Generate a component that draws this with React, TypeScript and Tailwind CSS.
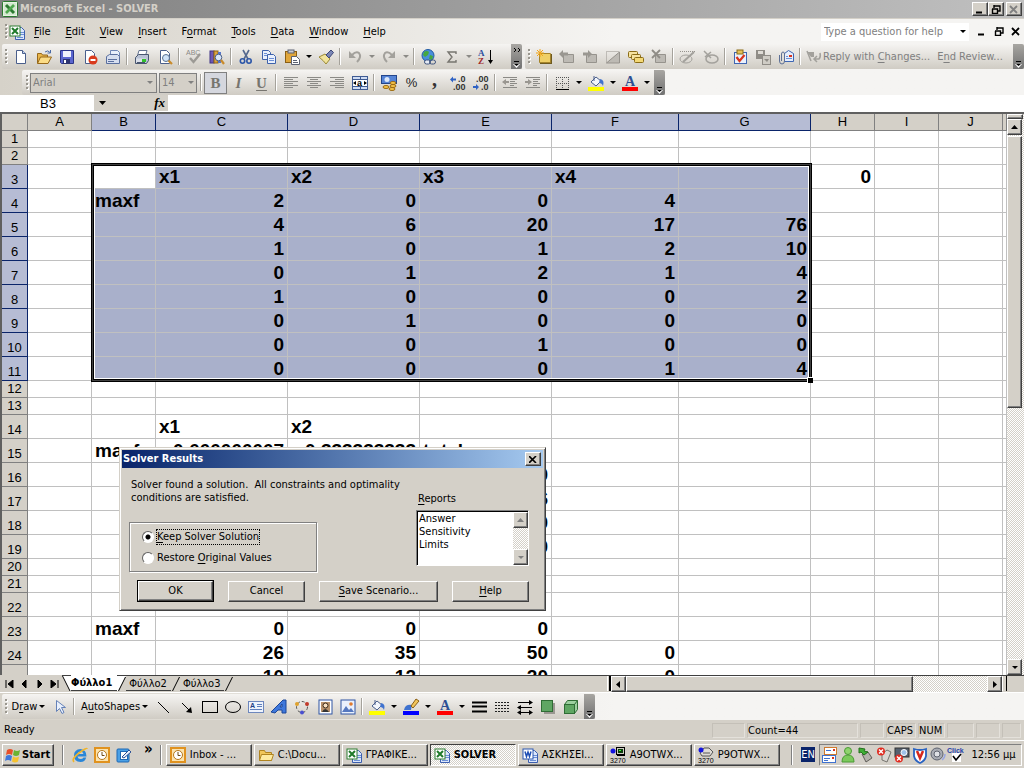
import { useState } from "react";
import type { ReactNode } from "react";

const RAISED =
  "bg-[#d4d0c8] border border-t-white border-l-white border-r-[#404040] border-b-[#404040] shadow-[inset_-1px_-1px_0_#808080]";
const UI_FONT = "font-['DejaVu_Sans_Condensed','DejaVu_Sans',sans-serif]";
const BAR = "flex h-[25px] items-center rounded-l-xs bg-linear-to-b from-[#f5f4f2] to-[#d0ccc4]";
const DITHER = "bg-[repeating-conic-gradient(#ffffff_0_25%,#d4d0c8_0_50%)] bg-[length:2px_2px]";

const page = <path d="M3.5 1.5h6l3 3v10h-9z" fill="#fff" stroke="#4a5f8c" />;
const excelBox = (
  <>
    <rect x="1" y="2" width="10" height="10" fill="#fff" stroke="#2f7d32" />
    <path d="M3 4l6 6M9 4l-6 6" stroke="#1f7a2a" strokeWidth="2" />
  </>
);
const lines = (d: string, c = "#8b8a86") => <path d={d} stroke={c} strokeWidth="1" fill="none" shapeRendering="crispEdges" />;
const greyNote = <path d="M4.5 5.5h10v8h-10z" fill="#bdbab4" stroke="#96938d" />;

const icons: Record<string, ReactNode> = {
  excel: (
    <>
      <rect x="0.5" y="0.5" width="15" height="15" rx="1" fill="#e6f2e2" stroke="#2b7a2f" />
      <rect x="2" y="2" width="12" height="12" fill="#d3e8cf" />
      <path d="M4 4l8 8" stroke="#2b7a2f" strokeWidth="3" />
      <path d="M12 4l-8 8" stroke="#4fa84f" strokeWidth="2.6" />
    </>
  ),
  workbook: (
    <>
      <path d="M6.5 3.5h6l3 3v9h-9z" fill="#dbe6fb" stroke="#3c5fae" />
      {lines("M11 8.5h4M11 10.5h4M8 13.5h6", "#6b8fd6")}
      {excelBox}
    </>
  ),
  wordDoc: (
    <>
      <path d="M6.5 3.5h6l3 3v9h-9z" fill="#dbe6fb" stroke="#3c5fae" />
      {lines("M11 8.5h4M11 10.5h4M8 13.5h6", "#6b8fd6")}
      <rect x="1" y="2" width="10" height="10" fill="#fff" stroke="#2b56b0" />
      <path d="M3 4.5l1.5 5L6 5l1.5 4.5L9 4.5" fill="none" stroke="#1f4fb4" strokeWidth="1.5" />
    </>
  ),
  newDoc: (
    <>
      {page}
      <path d="M9.5 1.5v3h3" fill="#c4d5f2" stroke="#4a5f8c" />
    </>
  ),
  open: (
    <>
      <path d="M1.5 4.5h4l1 1.5h5v8h-10z" fill="#e9b64a" stroke="#97681a" />
      <path d="M1.5 14.5l3-6.5h11l-3.5 6.5z" fill="#fbdc86" stroke="#97681a" />
      <path d="M9 3q3-2.5 5 .5M14.5 1v3h-3" fill="none" stroke="#4a6aa5" />
    </>
  ),
  save: (
    <>
      <path d="M1.5 1.5h13v13h-12l-1-1z" fill="#5b66cf" stroke="#2a3488" />
      <rect x="4" y="2" width="8" height="6" fill="#eef1fb" />
      <rect x="4" y="10" width="7" height="5" fill="#2c3470" />
      <rect x="5" y="11" width="2" height="3" fill="#fff" />
    </>
  ),
  permission: (
    <>
      {page}
      <circle cx="11" cy="11" r="4.5" fill="#d93a1c" />
      <rect x="8.5" y="10" width="5" height="2" fill="#fff" />
    </>
  ),
  printMail: (
    <>
      <path d="M5.5 1.5h7l2 2v6h-9z" fill="#e8effb" stroke="#6f86b6" />
      <path d="M1.5 7.5l3-2h8l2 2v7h-13z" fill="#d6deef" stroke="#5a6f9e" />
      {lines("M3 10.5h9M3 12.5h6", "#5a6f9e")}
    </>
  ),
  print: (
    <>
      <path d="M5 1.5h8l-1.5 5h-8z" fill="#fff" stroke="#60708f" />
      <path d="M1.5 8.5l3-3h10v6l-2 3h-11z" fill="#b9c2d4" stroke="#49566f" />
      <path d="M2 9.5h10v4H2z" fill="#dbe0ea" />
      <rect x="8" y="10" width="4" height="3" fill="#32c02c" />
      {lines("M3 13.5h8", "#49566f")}
    </>
  ),
  preview: (
    <>
      {page}
      <circle cx="9" cy="9" r="3.5" fill="#cfe2f8" stroke="#59708f" />
      <path d="M11.5 11.5l3.5 3.5" stroke="#c98b2b" strokeWidth="2.2" />
    </>
  ),
  spelling: (
    <>
      <text x="0" y="6" fontSize="7" fontFamily="Liberation Sans" fill="#8b8a86">
        ABC
      </text>
      <path d="M4 9l3.5 4L14 5" fill="none" stroke="#9c9a95" strokeWidth="2.4" />
    </>
  ),
  research: (
    <>
      <rect x="1" y="2" width="4" height="12" fill="#6d58b5" stroke="#3f3284" />
      <rect x="5" y="2" width="4" height="12" fill="#d9a441" stroke="#8f6415" />
      <rect x="9" y="3" width="3" height="11" fill="#5776c9" />
      <circle cx="9.5" cy="8.5" r="3.3" fill="#d8e6f9" stroke="#4b5f86" />
      <path d="M12 11l3 4" stroke="#c98b2b" strokeWidth="2.2" />
    </>
  ),
  cut: (
    <>
      <path d="M5 1l5 9M11 1L6 10" stroke="#55698f" strokeWidth="1.6" />
      <circle cx="4.5" cy="12" r="2.2" fill="none" stroke="#2c56a8" strokeWidth="1.6" />
      <circle cx="11" cy="12" r="2.2" fill="none" stroke="#2c56a8" strokeWidth="1.6" />
    </>
  ),
  copy: (
    <>
      <path d="M1.5 1.5h6l2 2v7h-8z" fill="#e9f0fc" stroke="#3e62ab" />
      <path d="M6.5 5.5h6l2 2v7h-8z" fill="#e9f0fc" stroke="#3e62ab" />
      {lines("M3 4.5h3M3 6.5h3M8 9.5h5M8 11.5h5", "#6b8fd6")}
    </>
  ),
  paste: (
    <>
      <rect x="1.5" y="2.5" width="11" height="11" fill="#e0a63a" stroke="#8a5f14" />
      <rect x="4" y="1" width="6" height="3" fill="#c9ccd4" stroke="#5b6170" />
      <path d="M7.5 7.5h5l3 3v5h-8z" fill="#fff" stroke="#5b6170" />
      {lines("M9 11.5h4M9 13.5h5", "#5b6170")}
    </>
  ),
  painter: (
    <>
      <path d="M1 8l6-3 5 5-4 5q-2-3-7-7z" fill="#f1e39a" stroke="#9b8a36" />
      <path d="M8 6l5-5 2.5 2.5L11 9z" fill="#7a86b5" stroke="#3c4676" />
    </>
  ),
  undo: (
    <>
      <path d="M2 2v7h7z" fill="#a3a19c" />
      <path d="M5 6q4-4 7-2 3 4-2 9" fill="none" stroke="#a3a19c" strokeWidth="2" />
    </>
  ),
  redo: (
    <>
      <path d="M14 2v7H7z" fill="#a3a19c" />
      <path d="M11 6Q7 2 4 4q-3 4 2 9" fill="none" stroke="#a3a19c" strokeWidth="2" />
    </>
  ),
  hyperlink: (
    <>
      <circle cx="7" cy="6.5" r="6" fill="#4a8fdb" stroke="#1f5aa3" />
      <path d="M3 3q3-2 5 0l-1 3-3 2-2-2zM9 6l3 1-1 4-3-1z" fill="#46a83f" />
      <rect x="3.5" y="11" width="6" height="4" rx="2" fill="#e5ebf5" stroke="#41557e" />
      <rect x="8.5" y="11" width="6" height="4" rx="2" fill="none" stroke="#41557e" />
    </>
  ),
  sum: <path d="M12 5V3H4l4 5-4 5h8v-2" fill="none" stroke="#77756f" strokeWidth="1.4" />,
  sort: (
    <>
      <text x="0" y="7" fontSize="9" fontWeight="bold" fontFamily="Liberation Serif" fill="#2a4fa0">
        A
      </text>
      <text x="0" y="15" fontSize="9" fontWeight="bold" fontFamily="Liberation Serif" fill="#a02a2a">
        Z
      </text>
      <path d="M12.5 1v11" stroke="#000" />
      <path d="M10 11h5l-2.5 4z" />
    </>
  ),
  comment: (
    <>
      <path d="M4 5h12v10H4z" fill="#6e5a20" />
      <path d="M3.5 4.5h11v9h-11z" fill="#efcf66" stroke="#a5842a" />
      <path d="M4 0v8M0 4h8M1 1l6 6M7 1L1 7" stroke="#f2a516" />
    </>
  ),
  notePrev: (
    <>
      {greyNote}
      <path d="M0 5l4-4v2.5h5v3H4V9z" fill="#9a9791" />
    </>
  ),
  noteNext: (
    <>
      {greyNote}
      <path d="M10 5L6 1v2.500H1v3h5V9z" fill="#9a9791" />
    </>
  ),
  noteShow: (
    <>
      <path d="M1.5 13.5v-11h13" fill="none" stroke="#96938d" strokeDasharray="1 1" />
      <path d="M14.5 3v11h-13z" fill="#bdbab4" stroke="#96938d" />
    </>
  ),
  noteAll: (
    <>
      <rect x="0.5" y="2.5" width="9" height="6" rx="1" fill="#f6e3a0" stroke="#8b6c16" />
      <rect x="3.5" y="5.5" width="9" height="5" rx="1" fill="#f6e3a0" stroke="#8b6c16" />
      <rect x="6.5" y="8.5" width="9" height="5" rx="1" fill="#f3d876" stroke="#8b6c16" />
    </>
  ),
  noteDelete: (
    <>
      {greyNote}
      <path d="M1 1l8 8M9 1L1 9" stroke="#8f8c86" strokeWidth="1.8" />
    </>
  ),
  inkShow: (
    <>
      <path d="M0 2.5h15" stroke="#96938d" strokeDasharray="1 1" />
      <ellipse cx="6" cy="10" rx="6" ry="4" fill="none" stroke="#a3a19c" />
      <path d="M14 3L3 13" stroke="#a3a19c" strokeWidth="2" />
    </>
  ),
  inkErase: (
    <>
      <ellipse cx="9" cy="10" rx="6" ry="4" fill="none" stroke="#a3a19c" strokeWidth="1.5" />
      <path d="M1 2l7 7M8 3L2 8" stroke="#a3a19c" strokeWidth="1.5" />
    </>
  ),
  task: (
    <>
      <rect x="2.5" y="3.5" width="12" height="11" fill="#eaf1fd" stroke="#3f66b3" />
      <rect x="5" y="1" width="6" height="4" fill="#e4c15a" stroke="#8b6c16" />
      <path d="M4.5 8l3 4 5-6" fill="none" stroke="#d8341d" strokeWidth="2.2" />
    </>
  ),
  version: (
    <>
      <rect x="1" y="1" width="9" height="9" fill="#8f8c86" />
      <rect x="3" y="2" width="5" height="3" fill="#dedbd5" />
      <rect x="7.5" y="6.5" width="8" height="9" fill="#cfccc5" stroke="#8f8c86" />
      <path d="M9 10h5l-2 3z" fill="#8f8c86" />
    </>
  ),
  attach: (
    <>
      <path d="M6.5 4.5l4-3 5 3v8h-9z" fill="#e5eefc" stroke="#3f66b3" />
      <rect x="11" y="6" width="3" height="2" fill="#d8341d" />
      {lines("M8 7.5h2M8 9.5h6", "#6b8fd6")}
      <path d="M1.5 6v6q0 3 2.5 3t2.5-3V5q0-2-1.5-2T3.5 5v7" fill="none" stroke="#5d7096" />
    </>
  ),
  reply: (
    <>
      <path d="M1 3h7v5H5z" fill="#a3a19c" />
      <path d="M1 2l4 10M8 10h5q2-2 1-6M11 7l-3 3 3 3" fill="none" stroke="#a3a19c" strokeWidth="1.5" />
    </>
  ),
  alignLeft: lines("M1 2.5h14M1 4.5h9M1 6.5h14M1 8.5h9M1 10.5h14M1 12.5h9"),
  alignCenter: lines("M1 2.5h14M4 4.5h8M1 6.5h14M4 8.5h8M1 10.5h14M4 12.5h8"),
  alignRight: lines("M1 2.5h14M6 4.5h9M1 6.5h14M6 8.5h9M1 10.5h14M6 12.5h9"),
  merge: (
    <>
      <rect x="0.5" y="1.5" width="15" height="13" fill="#cfdcf3" stroke="#3e5a92" />
      {lines("M0 4.5h16M0 11.5h16M8.5 1v3M8.5 12v3", "#3e5a92")}
      <rect x="1" y="5" width="14" height="6" fill="#fff" />
      <text x="5" y="11" fontSize="9" fontWeight="bold" fontFamily="Liberation Sans">
        a
      </text>
      <path d="M1 8l3-2v4zM15 8l-3-2v4z" />
    </>
  ),
  currency: (
    <>
      <rect x="0.5" y="0.5" width="15" height="8" fill="#5684d6" stroke="#24468b" />
      <circle cx="6" cy="4.500" r="2.5" fill="#dbe8fb" />
      <ellipse cx="12" cy="8" rx="3" ry="1.5" fill="#f6c54a" stroke="#9b6a12" />
      <ellipse cx="12" cy="11" rx="3" ry="1.5" fill="#f6c54a" stroke="#9b6a12" />
      <ellipse cx="5" cy="12" rx="3" ry="1.5" fill="#f6c54a" stroke="#9b6a12" />
      <ellipse cx="11" cy="14" rx="3" ry="1.5" fill="#f6c54a" stroke="#9b6a12" />
    </>
  ),
  decInc: (
    <>
      <path d="M0 4.5l3-3v2h3v2H3v2z" fill="#2f62c4" />
      <text x="8" y="7" fontSize="9" fontWeight="bold" fontFamily="Liberation Sans" fill="#333">
        .0
      </text>
      <text x="3" y="15" fontSize="9" fontWeight="bold" fontFamily="Liberation Sans" fill="#333">
        .00
      </text>
    </>
  ),
  decDec: (
    <>
      <text x="3" y="7" fontSize="9" fontWeight="bold" fontFamily="Liberation Sans" fill="#333">
        .00
      </text>
      <text x="8" y="15" fontSize="9" fontWeight="bold" fontFamily="Liberation Sans" fill="#333">
        .0
      </text>
      <path d="M6 12l-3-3v2H0v2h3v2z" fill="#2f62c4" />
    </>
  ),
  outdent: (
    <>
      {lines("M1 2.5h14M8 4.5h7M8 6.5h5M8 8.5h7M1 12.5h14M8 10.5h4")}
      <path d="M0 7l4-3v2h3v2H4v2z" fill="#9a9791" />
    </>
  ),
  indent: (
    <>
      {lines("M1 2.5h14M8 4.5h7M8 6.5h5M8 8.5h7M1 12.5h14M8 10.5h4")}
      <path d="M7 7L3 4v2H0v2h3v2z" fill="#9a9791" />
    </>
  ),
  borders: (
    <>
      <path d="M2.5 2v11M8.5 2v11M14.5 2v11M2 2.5h13M2 8.5h13" stroke="#555" strokeDasharray="1 1" />
      <path d="M2 14.5h13" stroke="#000" />
    </>
  ),
  fill: (
    <>
      <path d="M3 7l5-5 5 4-5 5z" fill="#f2f5fb" stroke="#4a5f8c" />
      <path d="M6 1v5" stroke="#4a5f8c" />
      <path d="M12 4q5 1 3 7-1-3-4-3z" fill="#3f72cf" />
      <rect x="0" y="12" width="16" height="4" fill="#ffff00" />
    </>
  ),
  lineColor: (
    <>
      <path d="M1 11q1-6 8-5l-1 5z" fill="#3f72cf" />
      <path d="M8 7l5-7 3 2-6 7z" fill="#f2c55b" stroke="#8a5f14" />
      <rect x="0" y="12" width="16" height="4" fill="#0000ff" />
    </>
  ),
  fontColor: (
    <>
      <text x="3" y="11" fontSize="14" fontWeight="bold" fontFamily="Liberation Serif" fill="#2d4f94">
        A
      </text>
      <rect x="0" y="12" width="16" height="4" fill="#ff0000" />
    </>
  ),
  cursor: <path d="M4.5 1.5v11l3-3 2.5 5 2-1-2.5-5h4z" fill="#e9f0fc" stroke="#6582b8" />,
  line: <path d="M2 3l11 11" stroke="#000" />,
  arrow: (
    <>
      <path d="M3 4l8 8" stroke="#000" />
      <path d="M13 14l-1-6-5 5z" />
    </>
  ),
  rect: <rect x="0.5" y="2.5" width="15" height="11" fill="none" stroke="#000" />,
  oval: <ellipse cx="8" cy="8" rx="7.5" ry="5.5" fill="none" stroke="#000" />,
  textBox: (
    <>
      <rect x="0.5" y="2.5" width="15" height="11" fill="#eef3fc" stroke="#6d87bd" />
      <text x="2" y="9" fontSize="7" fontWeight="bold" fontFamily="Liberation Sans" fill="#1f3f85">
        A
      </text>
      {lines("M9 5.5h5M9 7.5h5M2 10.5h12", "#5e7fbd")}
    </>
  ),
  wordArt: <path d="M0 13L12 1h3v13h-4v-3H7l-3 3zM9 8h2V5z" fill="#3f78dc" stroke="#1d4798" fillRule="evenodd" />,
  diagram: (
    <>
      <circle cx="8" cy="8" r="5.5" fill="none" stroke="#555" strokeDasharray="3 2" />
      <circle cx="3" cy="5" r="2" fill="#e0a22e" />
      <circle cx="13" cy="5" r="2" fill="#c23a2b" />
      <circle cx="8" cy="13.5" r="2" fill="#4a4fd0" />
    </>
  ),
  clipArt: (
    <>
      <rect x="2" y="1" width="13" height="14" fill="#fff" stroke="#2f55a3" />
      <rect x="4" y="3" width="9" height="10" fill="#b9916a" />
      <circle cx="8.5" cy="6.5" r="2.5" fill="#f7dfc0" stroke="#3a2a1a" />
      <path d="M5 13q3-6 7 0z" fill="#333" />
    </>
  ),
  picture: (
    <>
      <rect x="1" y="1" width="14" height="14" fill="#eaf1fd" stroke="#2f55a3" />
      <path d="M2 13l4-6 3 4 2-2 3 4z" fill="#5578c0" />
      <circle cx="11" cy="5" r="1.8" fill="#e07a2e" />
    </>
  ),
  lineStyle: <path d="M1 3.5h15M1 7.5h15M1 12.5h15" stroke="#000" strokeWidth="2" />,
  dashStyle: <path d="M1 3.5h15M1 6.5h15M1 9.5h15M1 12.5h15" stroke="#222" strokeDasharray="2 1" />,
  arrowStyle: (
    <>
      <path d="M1 3.5h14M1 8.5h14M1 13.5h14" stroke="#000" />
      <path d="M12 1l4 2.5-4 2.5zM4 6L0 8.5 4 11zM12 11l4 2.5-4 2.5zM4 11l-4 2.5 4 2.5z" />
    </>
  ),
  shadow: (
    <>
      <rect x="4" y="4" width="11" height="11" fill="#9a9791" />
      <rect x="1.5" y="1.5" width="11" height="11" fill="#5fa663" stroke="#2f6d35" />
    </>
  ),
  cube: (
    <>
      <path d="M1.5 5.5l3-4h10v9l-3 4h-10z" fill="#9dd0a0" stroke="#2f6d35" />
      <rect x="1.5" y="5.5" width="10" height="9" fill="#5fa663" stroke="#2f6d35" />
      <path d="M11.5 5.5l3-4" stroke="#2f6d35" />
    </>
  ),
  windows: (
    <>
      <path d="M2 3q3-2 6 0L7 8Q4 6 1 8z" fill="#e8502a" />
      <path d="M9 3q3 2 6 0l-1 5q-3 2-6 0z" fill="#6bb332" />
      <path d="M1 9q3-2 6 0l-1 5q-3-2-6 0z" fill="#3f78dc" />
      <path d="M8 9.5q3 2 6 0l-1 5q-3 2-6 0z" fill="#f6c22e" />
    </>
  ),
  ie: (
    <>
      <path
        d="M14.500 9.500H5.500q.5 2.500 3 2.500 2 0 3-1.500h2.700Q13 15 8.500 15 2 14.500 2 8.500T8.500 2q6 .5 6 7.500zM5.500 7h6Q11 4.800 8.500 4.800T5.500 7z"
        fill="#2a86d8"
        fillRule="evenodd"
      />
      <path d="M2 15q-3-3 5-9t8-4" fill="none" stroke="#f0b52b" strokeWidth="1.6" />
    </>
  ),
  outlook: (
    <>
      <rect x="1" y="1" width="14" height="14" fill="#fbe3ae" stroke="#e0921f" strokeWidth="2" />
      <circle cx="8" cy="8" r="4.5" fill="#fff" stroke="#b5761a" />
      <path d="M8 5v3.5h2.5" fill="none" stroke="#6d4a16" />
    </>
  ),
  desktop: (
    <>
      <rect x="1" y="2" width="12" height="13" rx="1" fill="#4aa0e6" stroke="#1f68b4" />
      <rect x="4.5" y="4.5" width="7" height="8" fill="#fff" stroke="#1f68b4" />
      <path d="M6 10l7-7 2 2-7 6z" fill="#e9f0fc" stroke="#2a4f94" />
    </>
  ),
  folder: (
    <>
      <path d="M1.5 3.5h5l1 2h6v8h-12z" fill="#f0c65a" stroke="#b08420" />
      <path d="M1.5 13.5l2-6h12l-2 6z" fill="#fdeaa0" stroke="#b08420" />
    </>
  ),
  terminal: (
    <>
      <circle cx="3" cy="4" r="2.5" fill="#1414e0" />
      <rect x="6.5" y="0.5" width="8" height="7" fill="#cfccc5" stroke="#000" />
      <rect x="8" y="2" width="5" height="4" fill="#0a3d0a" />
      <rect x="9" y="3" width="2" height="1" fill="#3cff3c" />
      <path d="M7 8.5h8" stroke="#000" />
      <text x="0" y="16" fontSize="7" fontFamily="Liberation Sans">
        3270
      </text>
    </>
  ),
  termPrint: (
    <>
      <path d="M6 1h5l4 4-3 4H4L2 6z" fill="#dedbd5" stroke="#555" />
      <path d="M5 6h7" stroke="#555" />
      <circle cx="3" cy="3" r="2.5" fill="#1414e0" />
      <text x="0" y="16" fontSize="7" fontFamily="Liberation Sans">
        3270
      </text>
    </>
  ),
  mails: (
    <>
      <rect x="2.5" y="0.5" width="12" height="7" fill="#fff" stroke="#d07a2e" />
      <rect x="0.5" y="8.5" width="13" height="7" fill="#fff" stroke="#3f72cf" />
      {lines("M4 3.5h5M2 11.5h6M2 13.5h4", "#3f72cf")}
      <rect x="11" y="2" width="2" height="2" fill="#d8341d" />
      <rect x="10" y="10" width="2" height="2" fill="#d8341d" />
    </>
  ),
  buddy: (
    <>
      <circle cx="8" cy="4" r="3.5" fill="#8fd36e" stroke="#4a9a34" />
      <path d="M2 15q0-7 6-7t6 7z" fill="#7cc95c" stroke="#4a9a34" />
    </>
  ),
  usb: (
    <>
      <path d="M4 7l6-2 4 6-6 4z" fill="#b5b2ac" stroke="#5f5d58" />
      <path d="M1 1l6 1-1 2 4 1-4 3-3-3-2 1z" fill="#3fae35" stroke="#23701c" />
    </>
  ),
  netOff: (
    <>
      <path d="M6 7l5-4 4 2-4 10-5-2z" fill="#d9d7d2" stroke="#77756f" />
      <circle cx="5" cy="4.5" r="4" fill="#e02b20" />
      <path d="M3 2.5l4 4M7 2.5l-4 4" stroke="#fff" strokeWidth="1.4" />
    </>
  ),
  camera: (
    <>
      <rect x="1" y="1" width="14" height="9" fill="#55606f" stroke="#333" />
      <circle cx="10" cy="5.5" r="3" fill="#9fc2ea" stroke="#fff" />
      <circle cx="5" cy="11.5" r="4" fill="#e02b20" />
      <path d="M3 9.5l4 4M7 9.5l-4 4" stroke="#fff" strokeWidth="1.4" />
    </>
  ),
  shield: (
    <>
      <path d="M2 2q6 2 12 0v7q-1 5-6 7-5-2-6-7z" fill="#fff" stroke="#2a63c0" strokeWidth="1.8" />
      <path d="M5 4l3 7 3-7" fill="none" stroke="#d8281c" strokeWidth="2.5" />
    </>
  ),
  speaker: (
    <>
      <circle cx="7" cy="7" r="6" fill="#a8abb3" stroke="#5f6470" />
      <circle cx="7" cy="7" r="3" fill="#dfe1e6" stroke="#5f6470" />
      <path d="M12 13q3-2 3-6" fill="none" stroke="#9aa6e0" strokeWidth="1.5" />
    </>
  ),
  click: (
    <>
      <rect x="4" y="6" width="9" height="9" fill="#fff" />
      <path d="M5 9l3 4 5-6" fill="none" stroke="#000" strokeWidth="1.6" />
      <text x="-1" y="6" fontSize="7" fontWeight="bold" fontFamily="Liberation Sans" fill="#1f3fa8">
        Click
      </text>
    </>
  ),
};

function Icon({ name }: { name: string }) {
  return (
    <svg width="16" height="16" viewBox="0 0 16 16" className="shrink-0 overflow-visible" aria-hidden="true">
      {icons[name]}
    </svg>
  );
}

function Tri({ dir = "down", color = "#000" }: { dir?: "up" | "down" | "left" | "right"; color?: string }) {
  const d = { up: "M0 5h7L3.5 1z", down: "M1 2h6L4 5z", left: "M5 0v7L1 3.5z", right: "M2 0v7l4-3.5z" }[dir];
  return (
    <svg width="7" height="7" viewBox="0 0 7 7" className="shrink-0" aria-hidden="true">
      <path d={d} fill={color} />
    </svg>
  );
}

// Label with its access key underlined
function Label({ text, at }: { text: string; at: number }) {
  return (
    <span className="whitespace-pre">
      {text.slice(0, at)}
      <span className="underline underline-offset-2">{text[at]}</span>
      {text.slice(at + 1)}
    </span>
  );
}

function Grip() {
  return (
    <svg width="3" height="17" className="mr-px shrink-0" aria-hidden="true">
      {[0, 4, 8, 12].map((y) => (
        <g key={y}>
          <rect x="1" y={y + 2} width="2" height="2" fill="#fff" />
          <rect x="0" y={y + 1} width="2" height="2" fill="#9a978f" />
        </g>
      ))}
    </svg>
  );
}

function BarEnd({ chevron = false }: { chevron?: boolean }) {
  return (
    <button
      aria-label="Toolbar options"
      className="ml-auto flex h-[25px] w-[11px] shrink-0 flex-col items-center justify-between rounded-r-xs bg-linear-to-b from-[#a8a6a2] to-[#727272] pt-1 pb-px"
    >
      <svg width="8" height="6" aria-hidden="true">
        {chevron && <path d="M1 0l2 2-2 2M5 0l2 2-2 2" fill="none" stroke="#000" />}
      </svg>
      <svg width="7" height="8" aria-hidden="true">
        <path d="M1 1.5h5" stroke="#000" />
        <path d="M0 4h7L3.5 8z" fill="#fff" />
        <path d="M1 4h5L3.5 6z" />
      </svg>
    </button>
  );
}

// "|" is a separator, "v" and "V" are drop-down arrows, the rest are icon names
function Tools({ items }: { items: string[] }) {
  return (
    <>
      {items.map((item, i) => {
        if (item === "|") return <span key={i} className="mx-[2px] h-[17px] w-[2px] shrink-0 border-l border-[#a5a29b] bg-white" />;
        if (item === "v" || item === "V")
          return (
            <button key={i} aria-label="More" className="flex h-[22px] w-[11px] shrink-0 items-center justify-center">
              <Tri color={item === "V" ? "#000" : "#8b8a86"} />
            </button>
          );
        return (
          <button key={i} aria-label={item} className="flex h-[22px] w-[23px] shrink-0 items-center justify-center">
            <Icon name={item} />
          </button>
        );
      })}
    </>
  );
}

function ScrollButton({ dir, color }: { dir: "up" | "down" | "left" | "right"; color?: string }) {
  return (
    <button aria-label={`Scroll ${dir}`} className={`flex h-4 w-[15px] shrink-0 items-center justify-center ${RAISED}`}>
      <Tri dir={dir} color={color} />
    </button>
  );
}

const cols = ["A", "B", "C", "D", "E", "F", "G", "H", "I", "J", ""];
const colWidths = ["w-16", "w-16", "w-[132px]", "w-[132px]", "w-[132px]", "w-[127px]", "w-[132px]", "w-16", "w-16", "w-16", "w-auto"];

const cells: Record<number, string[]> = {
  3: ["", "", "x1", "x2", "x3", "x4", "", "0"],
  4: ["", "maxf", "2", "0", "0", "4"],
  5: ["", "", "4", "6", "20", "17", "76"],
  6: ["", "", "1", "0", "1", "2", "10"],
  7: ["", "", "0", "1", "2", "1", "4"],
  8: ["", "", "1", "0", "0", "0", "2"],
  9: ["", "", "0", "1", "0", "0", "0"],
  10: ["", "", "0", "0", "1", "0", "0"],
  11: ["", "", "0", "0", "0", "1", "4"],
  14: ["", "", "x1", "x2"],
  15: ["", "maxf", "0.666666667", "0.333333333", "total"],
  16: ["", "", "", "", "0"],
  17: ["", "", "", "", "6"],
  18: ["", "", "", "", "0"],
  19: ["", "", "", "", "0"],
  23: ["", "maxf", "0", "0", "0"],
  24: ["", "", "26", "35", "50", "0"],
  25: ["", "", "10", "12", "20", "0"],
};
const shortRows = [1, 2, 12, 13, 20, 21];

function Sheet() {
  return (
    <div className="relative min-w-0 flex-1 overflow-hidden border-t-2 border-l-2 border-[#606060] bg-white font-['Liberation_Sans',Arial,sans-serif]">
      <table className="w-full table-fixed border-separate border-spacing-0">
        <colgroup>
          <col className="w-[26px]" />
          {colWidths.map((w, i) => (
            <col key={i} className={w} />
          ))}
        </colgroup>
        <thead>
          <tr className="h-[17px] text-[13px] leading-4">
            <th className="border-r border-b border-[#808080] bg-[#d4d0c8]" />
            {cols.map((c, i) => (
              <th
                key={i}
                className={`border-r border-b p-0 font-normal ${
                  i > 0 && i < 7 ? "border-[#0a246a] bg-[#b6bcd4]" : "border-[#808080] bg-[#d4d0c8]"
                }`}
              >
                {c}
              </th>
            ))}
          </tr>
        </thead>
        <tbody>
          {Array.from({ length: 25 }, (_, i) => i + 1).map((r) => (
            <tr key={r} className={shortRows.includes(r) ? "h-[17px]" : "h-6"}>
              <th
                className={`border-r border-b p-0 align-bottom text-[13px] leading-4 font-normal ${
                  r > 2 && r < 12 ? "border-[#0a246a] bg-[#b6bcd4]" : "border-[#808080] bg-[#d4d0c8]"
                }`}
              >
                {r}
              </th>
              {cols.map((_, c) => {
                const value = cells[r]?.[c] ?? "";
                const selected = r > 2 && r < 12 && c > 0 && c < 7 && !(r === 3 && c === 1);
                return (
                  <td
                    key={c}
                    className={`border-r border-b border-[#c0c0c0] px-[3px] py-0 align-top text-[19px] leading-[23px] font-bold whitespace-nowrap ${
                      selected ? "bg-[#a9b0cb]" : ""
                    } ${/^[\d.]+$/.test(value) ? "text-right" : "text-left"}`}
                  >
                    {value}
                  </td>
                );
              })}
            </tr>
          ))}
        </tbody>
      </table>
      {/* selection frame and fill handle */}
      <div className="pointer-events-none absolute top-[49px] left-[89px] h-[219px] w-[721px] border border-black shadow-[inset_0_0_0_1px_#404040,inset_0_0_0_2px_#000000,inset_0_0_0_3px_#ffffff]">
        <span className="absolute -right-[2px] -bottom-[2px] size-[6px] border-t border-l border-white bg-black" />
      </div>
    </div>
  );
}

function SolverDialog() {
  const [choice, setChoice] = useState("keep");
  const button = `h-[21px] text-center ${RAISED}`;

  return (
    <div
      role="dialog"
      aria-label="Solver Results"
      className="absolute top-[447px] left-[119px] w-[427px] border border-[#d4d0c8] border-r-[#404040] border-b-[#404040] bg-[#d4d0c8] p-[2px] pb-2 shadow-[inset_1px_1px_0_#ffffff,inset_-1px_-1px_0_#808080]"
    >
      <div className="flex h-[18px] items-center justify-between bg-linear-to-r from-[#0a246a] to-[#a6caf0] pr-[2px] pl-px font-bold text-white">
        Solver Results
        <button aria-label="Close" className={`flex h-[14px] w-4 items-center justify-center ${RAISED}`}>
          <svg width="8" height="7" aria-hidden="true">
            <path d="M0 0l7 7M7 0L0 7" stroke="#000" strokeWidth="1.6" />
          </svg>
        </button>
      </div>
      <div className="flex pt-[10px] pr-[14px] pl-[7px]">
        <div className="flex-1">
          <p className="pl-[2px] leading-[13px] whitespace-pre">
            {"Solver found a solution.  All constraints and optimality\nconditions are satisfied."}
          </p>
          <fieldset className="mt-[18px] flex h-[50px] w-[188px] flex-col justify-center gap-[5px] border border-[#808080] pl-3 shadow-[1px_1px_0_#ffffff,inset_1px_1px_0_#ffffff]">
            {[
              { id: "keep", text: "Keep Solver Solution", at: 0 },
              { id: "restore", text: "Restore Original Values", at: 8 },
            ].map((o) => (
              <label key={o.id} className="flex items-center">
                <input
                  type="radio"
                  name="solution"
                  checked={choice === o.id}
                  onChange={() => setChoice(o.id)}
                  className="size-3 appearance-none rounded-full border border-[#606060] border-r-white border-b-white bg-white bg-center bg-no-repeat checked:bg-[radial-gradient(circle,#000_2px,transparent_3px)]"
                />
                <span
                  className={`ml-[2px] border border-dotted leading-[14px] ${
                    choice === o.id ? "border-black" : "border-transparent"
                  }`}
                >
                  <Label text={o.text} at={o.at} />
                </span>
              </label>
            ))}
          </fieldset>
        </div>
        <div className="w-[113px] pt-[14px]">
          <label htmlFor="reports" className="ml-[2px] block leading-[14px]">
            <Label text="Reports" at={0} />
          </label>
          <div className="mt-1 flex h-14 border border-[#808080] border-r-white border-b-white bg-white shadow-[inset_1px_1px_0_#000000]">
            <select
              id="reports"
              size={4}
              className="h-[54px] min-w-0 flex-1 appearance-none overflow-hidden bg-transparent pt-px pl-[2px] text-[11px]"
            >
              <option className="h-[13px] min-h-0 p-0 leading-[13px]">Answer</option>
              <option className="h-[13px] min-h-0 p-0 leading-[13px]">Sensitivity</option>
              <option className="h-[13px] min-h-0 p-0 leading-[13px]">Limits</option>
            </select>
            <div className={`mt-px flex flex-col justify-between ${DITHER}`}>
              <ScrollButton dir="up" color="#808080" />
              <ScrollButton dir="down" color="#808080" />
            </div>
          </div>
        </div>
      </div>
      <div className="mt-2 flex items-center gap-[14px] pl-[15px]">
        <button className="h-[22px] w-[77px] border border-black">
          <span className={`block h-5 leading-[18px] ${RAISED}`}>OK</span>
        </button>
        <button className={`w-[77px] ${button}`}>Cancel</button>
        <button className={`w-[119px] ${button}`}>
          <Label text="Save Scenario..." at={0} />
        </button>
        <button className={`w-[77px] ${button}`}>
          <Label text="Help" at={0} />
        </button>
      </div>
    </div>
  );
}

const menus = [
  { text: "File", at: 0 },
  { text: "Edit", at: 0 },
  { text: "View", at: 0 },
  { text: "Insert", at: 0 },
  { text: "Format", at: 1 },
  { text: "Tools", at: 0 },
  { text: "Data", at: 0 },
  { text: "Window", at: 0 },
  { text: "Help", at: 0 },
];

function WindowGlyph({ kind, color = "#000" }: { kind: string; color?: string }) {
  return (
    <svg width="10" height="9" viewBox="0 0 10 9" aria-hidden="true">
      {kind === "min" && <path d="M1 7.5h6" stroke={color} strokeWidth="2" />}
      {kind === "restore" && (
        <path d="M3 1h6v5H7M3 0v3M1 4h5.5v4.5H1.5V4" fill="none" stroke={color} strokeWidth="1.4" />
      )}
      {kind === "close" && <path d="M1 1l7 7M8 1L1 8" stroke={color} strokeWidth="1.8" />}
    </svg>
  );
}

function TopBars() {
  return (
    <>
      <header className="flex h-[18px] items-center bg-linear-to-r from-[#808080] to-[#c0c0c0] pr-[2px] pl-[2px] font-bold text-[#d4d0c8]">
        <Icon name="excel" />
        <span className="ml-[2px] flex-1">Microsoft Excel - SOLVER</span>
        {["min", "restore", "close"].map((k) => (
          <button
            key={k}
            aria-label={k}
            className={`flex h-[14px] w-4 items-center justify-center last:ml-[2px] ${RAISED}`}
          >
            <WindowGlyph kind={k} color={k === "close" ? "#808080" : "#000"} />
          </button>
        ))}
      </header>

      <div className="bg-linear-to-r from-[#d6d2c9] to-[#f5f4f2] to-60%">
        <nav className="flex h-[26px] items-center border-t border-[#d4d0c8] pl-[5px]">
          <Grip />
          <Icon name="workbook" />
          <div className="ml-[2px] flex gap-px">
            {menus.map((m) => (
              <button key={m.text} className="px-[7px]">
                <Label text={m.text} at={m.at} />
              </button>
            ))}
          </div>
          <div className="mr-1 ml-auto flex h-[18px] w-[148px] items-center bg-white">
            <input
              aria-label="Type a question for help"
              placeholder="Type a question for help"
              className="min-w-0 flex-1 pl-[3px] outline-none placeholder:text-[#808080]"
            />
            <Tri />
            <span className="w-[3px]" />
          </div>
          {["min", "restore", "close"].map((k) => (
            <button key={k} aria-label={`${k} workbook`} className="flex w-[17px] justify-center">
              <WindowGlyph kind={k} />
            </button>
          ))}
        </nav>

        <div className="mb-px flex gap-[3px]">
          <div className={`${BAR} ml-[2px] w-[520px] pl-[3px]`}>
            <Grip />
            <Tools
              items={[
                "newDoc", "open", "save", "permission", "printMail", "|", "print", "preview", "|", "spelling", "research", "|",
                "cut", "copy", "paste", "V", "painter", "|", "undo", "v", "redo", "v", "|", "hyperlink", "sum", "v", "sort",
              ]}
            />
            <BarEnd chevron />
          </div>
          <div className={`${BAR} min-w-0 flex-1 pl-[3px]`}>
            <Grip />
            <Tools
              items={[
                "comment", "notePrev", "noteNext", "noteShow", "noteAll", "noteDelete", "|", "inkShow", "inkErase", "|",
                "task", "version", "attach", "|",
              ]}
            />
            <button disabled className="ml-[3px] flex items-center gap-px text-[#808080]">
              <Icon name="reply" />
              <Label text="Reply with Changes..." at={11} />
            </button>
            <button disabled className="ml-[7px] text-[#808080]">
              <Label text="End Review..." at={1} />
            </button>
            <BarEnd />
          </div>
        </div>

        <div className={`${BAR} ml-[22px] w-[643px] pl-1`}>
          <Grip />
          <div className="flex h-5 w-[127px] items-center border border-[#808080] bg-[#d4d0c8] pr-[3px]">
            <select disabled aria-label="Font" className="min-w-0 flex-1 appearance-none pl-[2px] text-[#808080] opacity-100">
              <option>Arial</option>
            </select>
            <Tri color="#808080" />
          </div>
          <div className="mr-px ml-[2px] flex h-5 w-[38px] items-center border border-[#808080] bg-[#d4d0c8] pr-[2px]">
            <select disabled aria-label="Font size" className="min-w-0 flex-1 appearance-none pl-[2px] text-[#808080] opacity-100">
              <option>14</option>
            </select>
            <Tri color="#808080" />
          </div>
          <Tools items={["|"]} />
          <div className="flex font-['Liberation_Serif',serif] text-[15px] font-bold text-[#77756f]">
            <button className="h-[22px] w-[23px] border border-[#808080] bg-[#d5d7de]">B</button>
            <button className="h-[22px] w-[23px] italic">I</button>
            <button className="h-[22px] w-[23px] underline underline-offset-2">U</button>
          </div>
          <Tools items={["|", "alignLeft", "alignCenter", "alignRight", "merge", "|", "currency"]} />
          <button className="w-[23px] font-['Liberation_Sans',sans-serif] text-[13px] text-[#222222]">%</button>
          <button className="h-[22px] w-[23px] pb-2 font-['Liberation_Serif',serif] text-[20px] leading-3 font-bold text-[#333333]">
            ,
          </button>
          <Tools items={["decInc", "decDec", "|", "outdent", "indent", "|", "borders", "V", "fill", "V", "fontColor", "V"]} />
          <BarEnd />
        </div>
      </div>

      <div className="flex h-[17px] bg-white pl-[2px] font-['Liberation_Sans',sans-serif] text-[13px]">
        <input aria-label="Name box" defaultValue="B3" className="h-4 w-[92px] text-center outline-none" />
        <div className="flex h-4 w-[74px] items-center justify-between bg-[#d4d0c8] pr-[3px] pl-[5px]">
          <svg width="7" height="5" aria-hidden="true">
            <path d="M0 0h7L3.5 4z" />
          </svg>
          <span className="font-['Liberation_Serif',serif] text-[13px] font-bold italic">fx</span>
        </div>
        <input aria-label="Formula" className="h-4 min-w-0 flex-1 outline-none" />
      </div>
    </>
  );
}

function VerticalScroll() {
  return (
    <div className={`flex w-[17px] flex-col border-t-2 border-[#606060] pr-px ${DITHER}`}>
      <div className={`h-[5px] shrink-0 ${RAISED}`} />
      <ScrollButton dir="up" />
      <div className={`mt-px h-[272px] w-[15px] ${RAISED}`} />
      <div className="mt-auto">
        <ScrollButton dir="down" />
      </div>
    </div>
  );
}

const navGlyphs = [
  { label: "First sheet", d: "M1 0v8M8 0v8L3 4z" },
  { label: "Previous sheet", d: "M6 0v8L2 4z" },
  { label: "Next sheet", d: "M3 0v8l4-4z" },
  { label: "Last sheet", d: "M8 0v8M1 0v8l5-4z" },
];

function SheetTabs() {
  const slash = (fill: string) => (
    <svg width="9" height="17" className="shrink-0" aria-hidden="true">
      <path d="M0 0h9L1 15H0z" fill={fill} />
      <path d="M8.5 1L1.5 15" stroke="#000" />
    </svg>
  );
  return (
    <div className="flex h-[17px] bg-[#d4d0c8] pl-[2px]">
      {navGlyphs.map((g) => (
        <button key={g.label} aria-label={g.label} className="flex w-[15px] items-center justify-center">
          <svg width="9" height="8" aria-hidden="true">
            <path d={g.d} stroke="#000" />
          </svg>
        </button>
      ))}
      <div className="flex flex-1 border-t border-[#404040]">
        <svg width="9" height="17" className="shrink-0" aria-hidden="true">
          <path d="M0 0h9v15H8z" fill="#fff" />
          <path d="M0.5 0L8 15" stroke="#000" />
        </svg>
        <button className="-mt-px h-4 border-b border-[#404040] bg-white pr-[5px] font-bold">Φύλλο1</button>
        {slash("#fff")}
        <button className="h-[15px] border-b border-[#404040] pr-[4px] pl-[3px] leading-[15px]">Φύλλο2</button>
        {slash("#d4d0c8")}
        <button className="h-[15px] border-b border-[#404040] pr-[4px] pl-[3px] leading-[15px]">Φύλλο3</button>
        {slash("#d4d0c8")}
      </div>
      <div className="flex w-[417px] border-t border-[#404040]">
        <span className="h-[15px] w-1 border-r-2 border-l border-l-white border-r-black" />
        <ScrollButton dir="left" />
        <div className={`flex h-4 flex-1 ${DITHER}`}>
          <span className={`w-[287px] ${RAISED}`} />
        </div>
        <ScrollButton dir="right" />
        <span className="h-[15px] w-[5px] border-r border-l border-l-white border-r-black" />
        <span className="w-[17px]" />
      </div>
    </div>
  );
}

function DrawBar() {
  return (
    <div className="h-7 border-t border-white bg-linear-to-r from-[#d6d2c9] to-[#f5f4f2] to-60% pt-px">
      <div className={`${BAR} ml-[2px] w-[593px] pl-[3px]`}>
        <Grip />
        <button className="flex w-[39px] items-center justify-center gap-px">
          <Label text="Draw" at={1} />
          <Tri />
        </button>
        <Tools items={["cursor", "|"]} />
        <button className="flex w-[75px] items-center justify-center gap-px">
          <Label text="AutoShapes" at={1} />
          <Tri />
        </button>
        <Tools
          items={[
            "line", "arrow", "rect", "oval", "textBox", "wordArt", "diagram", "clipArt", "picture", "|",
            "fill", "V", "lineColor", "V", "fontColor", "V", "lineStyle", "dashStyle", "arrowStyle", "shadow", "cube",
          ]}
        />
        <BarEnd />
      </div>
    </div>
  );
}

function StatusBar() {
  const cell = "h-[15px] shrink-0 border border-[#c4c0b8] border-r-[#e4e1db] border-b-[#e4e1db] leading-[13px]";
  return (
    <div className="flex h-5 items-center gap-[2px] bg-[#d4d0c8] pr-[3px] pl-1">
      <span className="flex-1">Ready</span>
      <span className={`${cell} w-[33px]`} />
      <span className={`${cell} w-[111px]`}>Count=44</span>
      <span className={`${cell} w-[24px]`} />
      <span className={`${cell} w-[30px]`}>CAPS</span>
      <span className={`${cell} w-[27px]`}>NUM</span>
      <span className={`${cell} w-[27px]`} />
      <span className={`${cell} w-[24px]`} />
      <span className={`${cell} w-[19px]`} />
    </div>
  );
}

const tasks = [
  { icon: "outlook", text: "Inbox - ..." },
  { icon: "folder", text: "C:\\Docu..." },
  { icon: "workbook", text: "ΓΡΑΦΙΚΕ..." },
  { icon: "workbook", text: "SOLVER", active: true },
  { icon: "wordDoc", text: "ΑΣΚΗΣΕΙ..." },
  { icon: "terminal", text: "A9OTWX..." },
  { icon: "termPrint", text: "P9OTWX..." },
];

function Taskbar() {
  const divider = "h-5 w-[2px] shrink-0 border-l border-[#808080] bg-white";
  return (
    <footer className="flex h-7 items-center border-t border-white bg-[#d4d0c8] px-[2px]">
      <button className={`flex h-[22px] w-[52px] items-center gap-px pl-[2px] font-bold ${RAISED}`}>
        <Icon name="windows" />
        Start
      </button>
      <span className={`${divider} ml-2`} />
      <div className="ml-2 flex items-center gap-[6px]">
        {["ie", "outlook", "desktop"].map((n) => (
          <button key={n} aria-label={n}>
            <Icon name={n} />
          </button>
        ))}
        <button className="-mt-3 ml-[6px] text-[15px] leading-3 font-bold">»</button>
      </div>
      <span className={`${divider} mr-1 ml-[7px]`} />
      <div className="flex flex-1 gap-[2px]">
        {tasks.map((t) => (
          <button
            key={t.text}
            className={`flex h-[22px] w-[86px] shrink-0 items-center gap-1 overflow-hidden pl-[3px] whitespace-nowrap ${
              t.active
                ? `border border-[#404040] border-r-white border-b-white font-bold ${DITHER}`
                : RAISED
            }`}
          >
            <Icon name={t.icon} />
            {t.text}
          </button>
        ))}
      </div>
      <span className={divider} />
      <span className="mr-1 ml-2 bg-[#0a246a] leading-[15px] text-white">EN</span>
      <div className="flex h-[22px] w-[203px] shrink-0 items-center gap-[2px] border border-[#808080] border-r-white border-b-white pl-[2px]">
        {["mails", "buddy", "usb", "netOff", "camera", "shield", "speaker", "click"].map((n) => (
          <Icon key={n} name={n} />
        ))}
        <time className="flex-1 text-center whitespace-nowrap">12:56 μμ</time>
      </div>
    </footer>
  );
}

export default function App() {
  return (
    <div className={`relative flex h-screen flex-col overflow-hidden bg-[#d4d0c8] text-[11px] leading-[14px] text-black ${UI_FONT}`}>
      <TopBars />
      <main className="flex min-h-0 flex-1">
        <Sheet />
        <VerticalScroll />
      </main>
      <SheetTabs />
      <DrawBar />
      <StatusBar />
      <Taskbar />
      <SolverDialog />
    </div>
  );
}
